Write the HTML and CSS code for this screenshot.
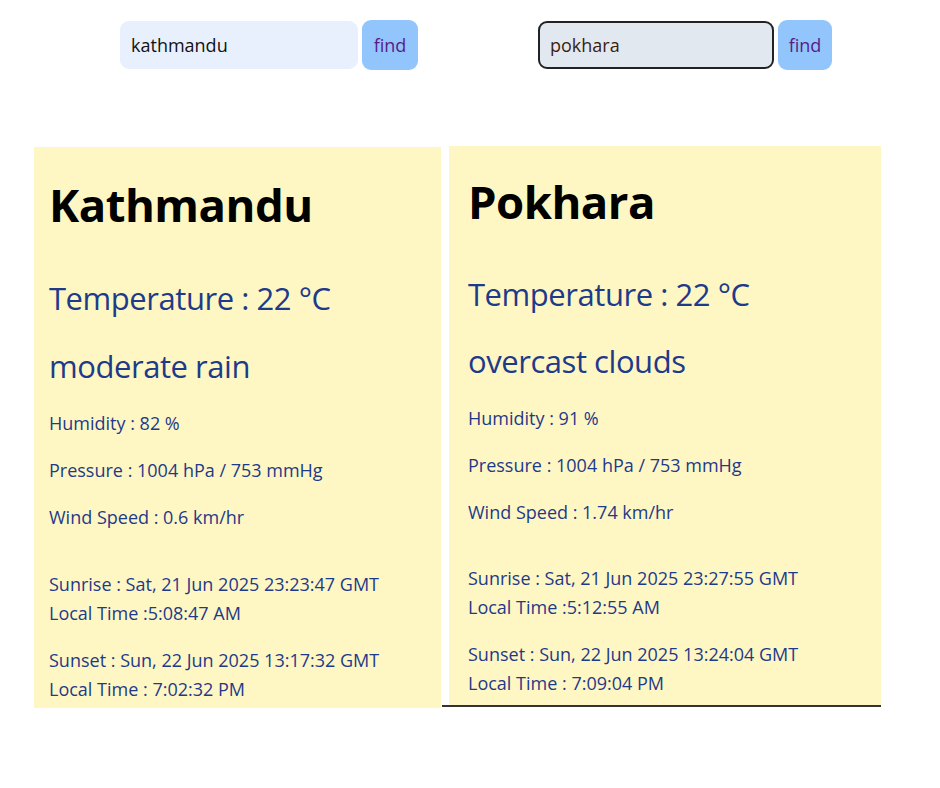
FILE: index.html
```html
<!DOCTYPE html>
<html lang="en">
<head>
<meta charset="utf-8">
<title>Weather</title>
<link rel="stylesheet" href="styles.css">
</head>
<body>
  <div class="search-row">
    <form class="search search-left">
      <input class="field field-auto" type="text" value="kathmandu">
      <button class="find" type="button">find</button>
    </form>
    <form class="search search-right">
      <input class="field field-focus" type="text" value="pokhara">
      <button class="find" type="button">find</button>
    </form>
  </div>

  <div class="cards">
    <section class="card card-left">
      <h1 class="city">Kathmandu</h1>
      <p class="big temp">Temperature : 22 °C</p>
      <p class="big desc">moderate rain</p>
      <p class="small hum">Humidity : 82 %</p>
      <p class="small gap">Pressure : 1004 hPa / 753 mmHg</p>
      <p class="small gap">Wind Speed : 0.6 km/hr</p>
      <p class="small sun">Sunrise : Sat, 21 Jun 2025 23:23:47 GMT<br>Local Time :5:08:47 AM</p>
      <p class="small gap">Sunset : Sun, 22 Jun 2025 13:17:32 GMT<br>Local Time : 7:02:32 PM</p>
    </section>
    <div class="right-wrap">
      <section class="card card-right">
        <h1 class="city">Pokhara</h1>
        <p class="big temp">Temperature : 22 °C</p>
        <p class="big desc">overcast clouds</p>
        <p class="small hum">Humidity : 91 %</p>
        <p class="small gap">Pressure : 1004 hPa / 753 mmHg</p>
        <p class="small gap">Wind Speed : 1.74 km/hr</p>
        <p class="small sun">Sunrise : Sat, 21 Jun 2025 23:27:55 GMT<br>Local Time :5:12:55 AM</p>
        <p class="small gap">Sunset : Sun, 22 Jun 2025 13:24:04 GMT<br>Local Time : 7:09:04 PM</p>
      </section>
    </div>
  </div>
</body>
</html>
```
FILE: styles.css
```css
* { box-sizing: border-box; }
html, body { margin: 0; padding: 0; background: #ffffff; }
body {
  width: 940px;
  height: 788px;
  font-family: "Open Sans", "Noto Sans", sans-serif;
  overflow: hidden;
}

.search-row {
  display: flex;
  padding: 20px 0 0 120px;
  gap: 120px;
  height: 146px;
}
.search {
  display: flex;
  align-items: flex-start;
  gap: 4px;
  margin: 0;
}
.field {
  height: 48px;
  margin-top: 1px;
  border-radius: 9px;
  padding: 0 10px;
  font-family: inherit;
  font-size: 18px;
  color: #111;
  outline: none;
}
.field-auto {
  width: 238px;
  background: #e8f0fe;
  border: 1px solid #e8f0fe;
}
.field-focus {
  width: 236px;
  background: #e2e8f0;
  border: 2px solid #222;
  color: #3b1d0e;
}
.find {
  width: 56px;
  height: 50px;
  border: none;
  border-radius: 9px;
  background: #93c5fd;
  color: #581c87;
  font-family: inherit;
  font-size: 18px;
  padding: 0;
}
.search-right .find { width: 54px; }

.cards {
  display: flex;
  align-items: flex-start;
  padding-left: 34px;
}
.card {
  background: #fef7c3;
  color: #1e3a8a;
}
.card-left {
  width: 407px;
  height: 561px;
  margin-top: 1px;
  padding: 33px 0 0 15px;
}
.right-wrap {
  margin-left: 1px;
  padding-left: 7px;
  border-bottom: 2px solid #333;
}
.card-right {
  width: 432px;
  height: 559px;
  padding: 31px 0 0 19px;
}

.city {
  margin: 0;
  font-size: 45.5px;
  line-height: 48px;
  font-weight: 700;
  color: #000;
  letter-spacing: -0.5px;
}
.big {
  margin: 0;
  font-size: 31px;
  line-height: 40px;
  letter-spacing: -0.45px;
}
.temp { margin-top: 50px; }
.desc { margin-top: 28px; }
.small {
  margin: 0;
  font-size: 18px;
  line-height: 29px;
}
.hum { margin-top: 23px; }
.gap { margin-top: 18px; }
.sun { margin-top: 38px; }

.card-right .temp { margin-top: 49px; }
.card-right .desc { margin-top: 27px; }
.card-right .hum { margin-top: 23px; }
.card-right .sun { margin-top: 37px; }
```
